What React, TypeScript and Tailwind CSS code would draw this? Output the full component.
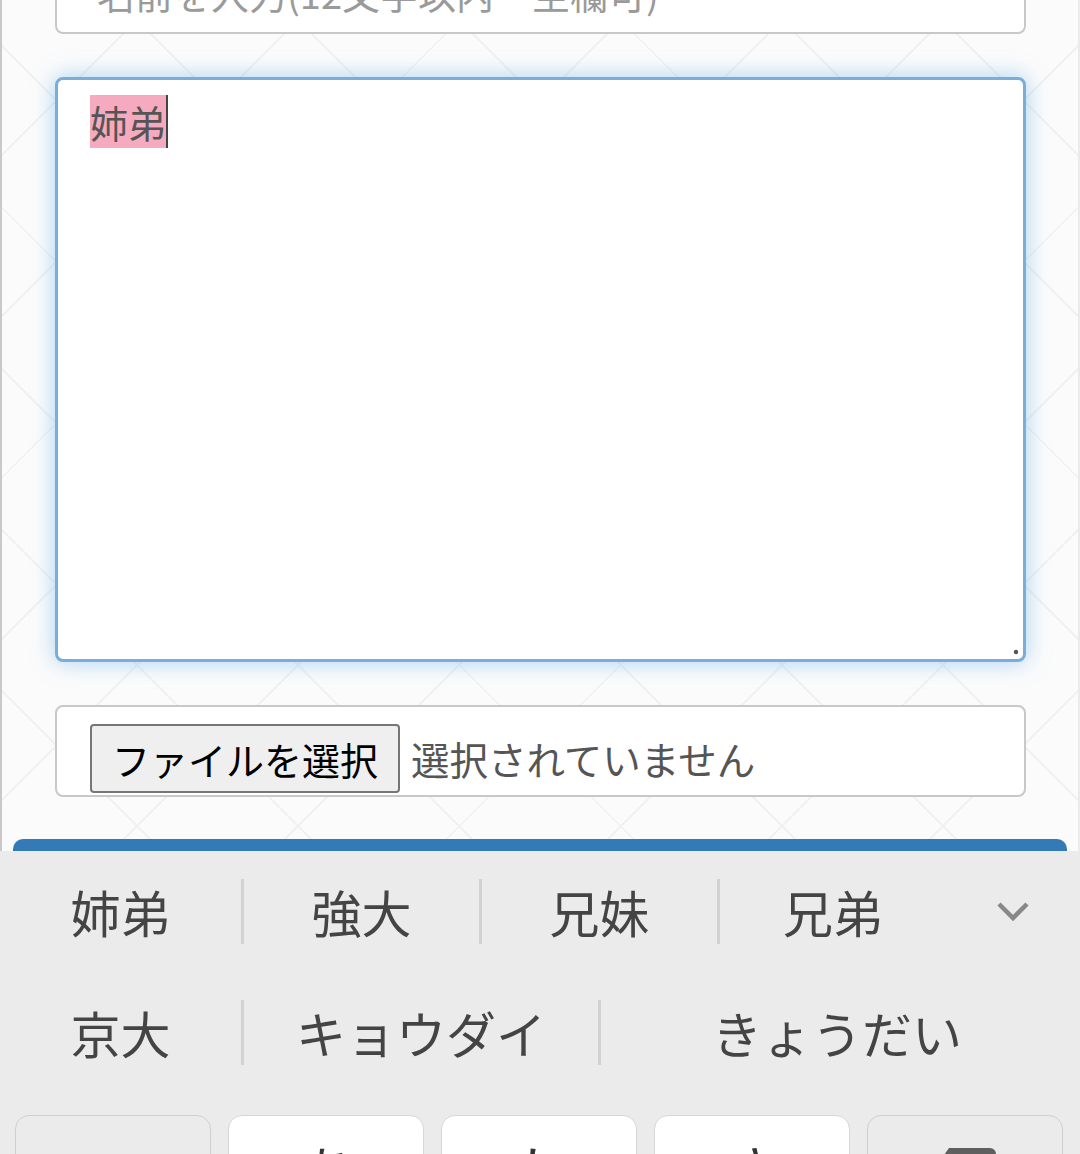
const rowOne = [
  { label: "姉弟", w: "w-[241px]" },
  { label: "強大", w: "w-[235px]" },
  { label: "兄妹", w: "w-[235px]" },
  { label: "兄弟", w: "w-[226px]" },
]

const rowTwo = [
  { label: "京大", w: "w-[241px]" },
  { label: "キョウダイ", w: "w-[354px]" },
  { label: "きょうだい", w: "w-[472px]" },
]

function Divider() {
  return <div className="w-[3px] h-[65px] bg-[#d2d2d2] shrink-0" />
}

function CandidateRow({ items, height }: { items: { label: string; w: string }[]; height: string }) {
  return (
    <div className={`flex items-center shrink-0 ${height}`}>
      {items.map((item, i) => (
        <div key={item.label} className="flex items-center">
          {i > 0 && <Divider />}
          <div className={`${item.w} text-center text-[50px] leading-[66px] text-[#444] whitespace-nowrap`}>{item.label}</div>
        </div>
      ))}
    </div>
  )
}

export default function App() {
  return (
    <div className="w-[1080px] h-[1154px] overflow-hidden flex flex-col font-['Noto_Sans_CJK_JP','Noto_Sans',sans-serif]">
      {/* form page behind the keyboard */}
      <div className="h-[851px] shrink-0 overflow-hidden flex flex-col border-l-2 border-l-[#c9c9c9] border-r-2 border-r-[#ebebeb] pl-[53px] pr-[52px] bg-[#fbfbfb] bg-[image:repeating-linear-gradient(45deg,transparent_0px,transparent_112px,#f1f1f1_112px,#f1f1f1_114px),repeating-linear-gradient(-45deg,transparent_0px,transparent_112px,#f1f1f1_112px,#f1f1f1_114px)]">
        <div className="-mt-[58px] h-[92px] shrink-0 rounded-[8px] border-2 border-[#c8c8c8] bg-white pl-[40px] pt-[21px] text-[38px] leading-[55px] text-[#9a9a9a] whitespace-nowrap">
          名前を入力(12文字以内・空欄可)
        </div>

        <div className="relative mt-[43px] h-[585px] shrink-0 rounded-[8px] border-[3px] border-[#7aaed8] bg-white pl-[32px] pt-[15px] shadow-[0_0_22px_rgba(102,175,233,0.55)]">
          <div className="flex items-stretch">
            <span className="bg-[#f5aabf] text-[38px] leading-[53px] text-[#555]">姉弟</span>
            <span className="w-[2px] bg-[#444]" />
          </div>
          <svg className="absolute right-[3px] bottom-[3px]" width="8" height="8" viewBox="0 0 8 8">
            <circle cx="4" cy="4" r="2.2" fill="#555" />
          </svg>
        </div>

        <div className="mt-[43px] h-[92px] shrink-0 rounded-[8px] border-2 border-[#c8c8c8] bg-white pl-[33px] pt-[17px] flex items-start gap-[11px]">
          <div className="h-[69px] px-[20px] rounded-[4px] border-2 border-[#767676] bg-[#efefef] flex items-center text-[38px] text-black whitespace-nowrap">
            ファイルを選択
          </div>
          <div className="h-[69px] flex items-center text-[38.5px] text-[#555] whitespace-nowrap">選択されていません</div>
        </div>

        <div className="mt-[42px] -ml-[42px] -mr-[41px] h-[60px] shrink-0 rounded-t-[10px] bg-[#337ab7]" />
      </div>

      {/* keyboard */}
      <div className="flex-1 bg-[#ebebeb] flex flex-col">
        <div className="flex items-center shrink-0 h-[120px]">
          <CandidateRow items={rowOne} height="h-[120px]" />
          <div className="w-[134px] flex justify-center pt-[2px]">
            <svg width="34" height="22" viewBox="0 0 34 22">
              <polyline points="3,3 17,17 31,3" fill="none" stroke="#888" strokeWidth="4.5" />
            </svg>
          </div>
        </div>
        <CandidateRow items={rowTwo} height="h-[122px]" />

        <div className="mt-[22px] flex gap-[17px] px-[15px]">
          <div className="w-[196px] h-[120px] rounded-[14px] border border-[#cfcfcf] bg-[#ebebeb]" />
          {["あ", "か", "さ"].map((k) => (
            <div
              key={k}
              className="w-[196px] h-[120px] rounded-[14px] border border-[#d6d6d6] bg-white pt-[26px] text-center text-[54px] leading-[54px] text-[#333]"
            >
              {k}
            </div>
          ))}
          <div className="w-[196px] h-[120px] rounded-[14px] border border-[#cfcfcf] bg-[#ebebeb] pt-[32px] flex justify-center">
            <svg width="62" height="42" viewBox="0 0 62 42">
              <path d="M15 0 H56 a6 6 0 0 1 6 6 V36 a6 6 0 0 1 -6 6 H15 L0 21 Z" fill="#5f5f5f" />
            </svg>
          </div>
        </div>
      </div>
    </div>
  )
}
